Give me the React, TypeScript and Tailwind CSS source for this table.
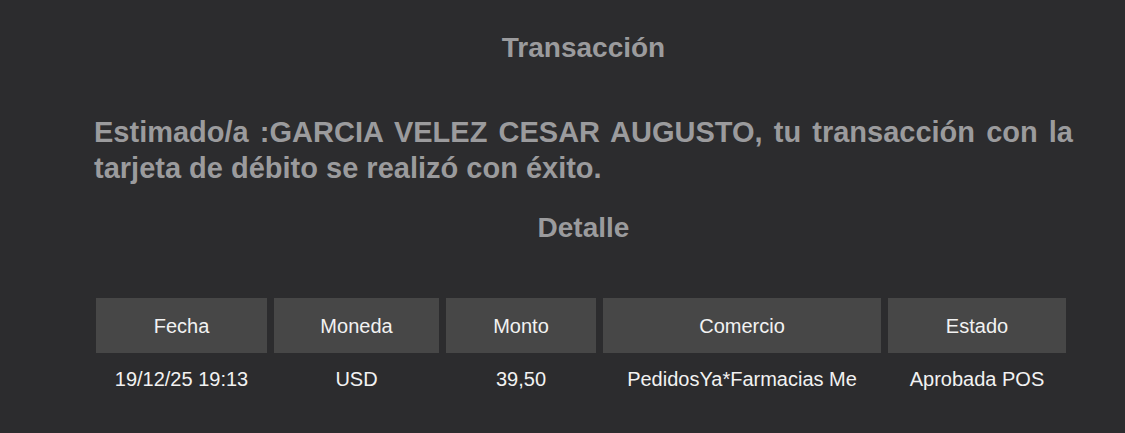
const cols = [
  { label: "Fecha", value: "19/12/25 19:13", w: "w-[171px]" },
  { label: "Moneda", value: "USD", w: "w-[165px]" },
  { label: "Monto", value: "39,50", w: "w-[150px]" },
  { label: "Comercio", value: "PedidosYa*Farmacias Me", w: "w-[278px]" },
  { label: "Estado", value: "Aprobada POS", w: "w-[178px]" },
]

const App = () => {
  return (
    <div className="min-h-[433px] w-full bg-[#2c2c2e] font-['Liberation_Sans',Arial,sans-serif]">
      <div className="pl-[94px] pr-[52px] pt-[32px]">
        <h1 className="text-center text-[28px] leading-[32px] font-bold text-[#9b9b9d]">Transacción</h1>
        <p className="mt-[50px] text-justify text-[29px] leading-[36px] font-bold text-[#9b9b9d]">
          Estimado/a :GARCIA VELEZ CESAR AUGUSTO, tu transacción con la tarjeta de débito se realizó con éxito.
        </p>
        <h2 className="mt-[26px] text-center text-[28px] leading-[32px] font-bold text-[#9b9b9d]">Detalle</h2>
        <table className="mt-[47px] -ml-[5px] border-separate border-spacing-[7px] text-[20px] text-[#f2f2f2]">
          <thead>
            <tr>
              {cols.map((c) => (
                <th key={c.label} className={`${c.w} h-[55px] bg-[#474747] font-normal text-center`}>
                  {c.label}
                </th>
              ))}
            </tr>
          </thead>
          <tbody>
            <tr>
              {cols.map((c) => (
                <td key={c.label} className="h-[38px] text-center whitespace-nowrap">
                  {c.value}
                </td>
              ))}
            </tr>
          </tbody>
        </table>
      </div>
    </div>
  )
}

export default App
